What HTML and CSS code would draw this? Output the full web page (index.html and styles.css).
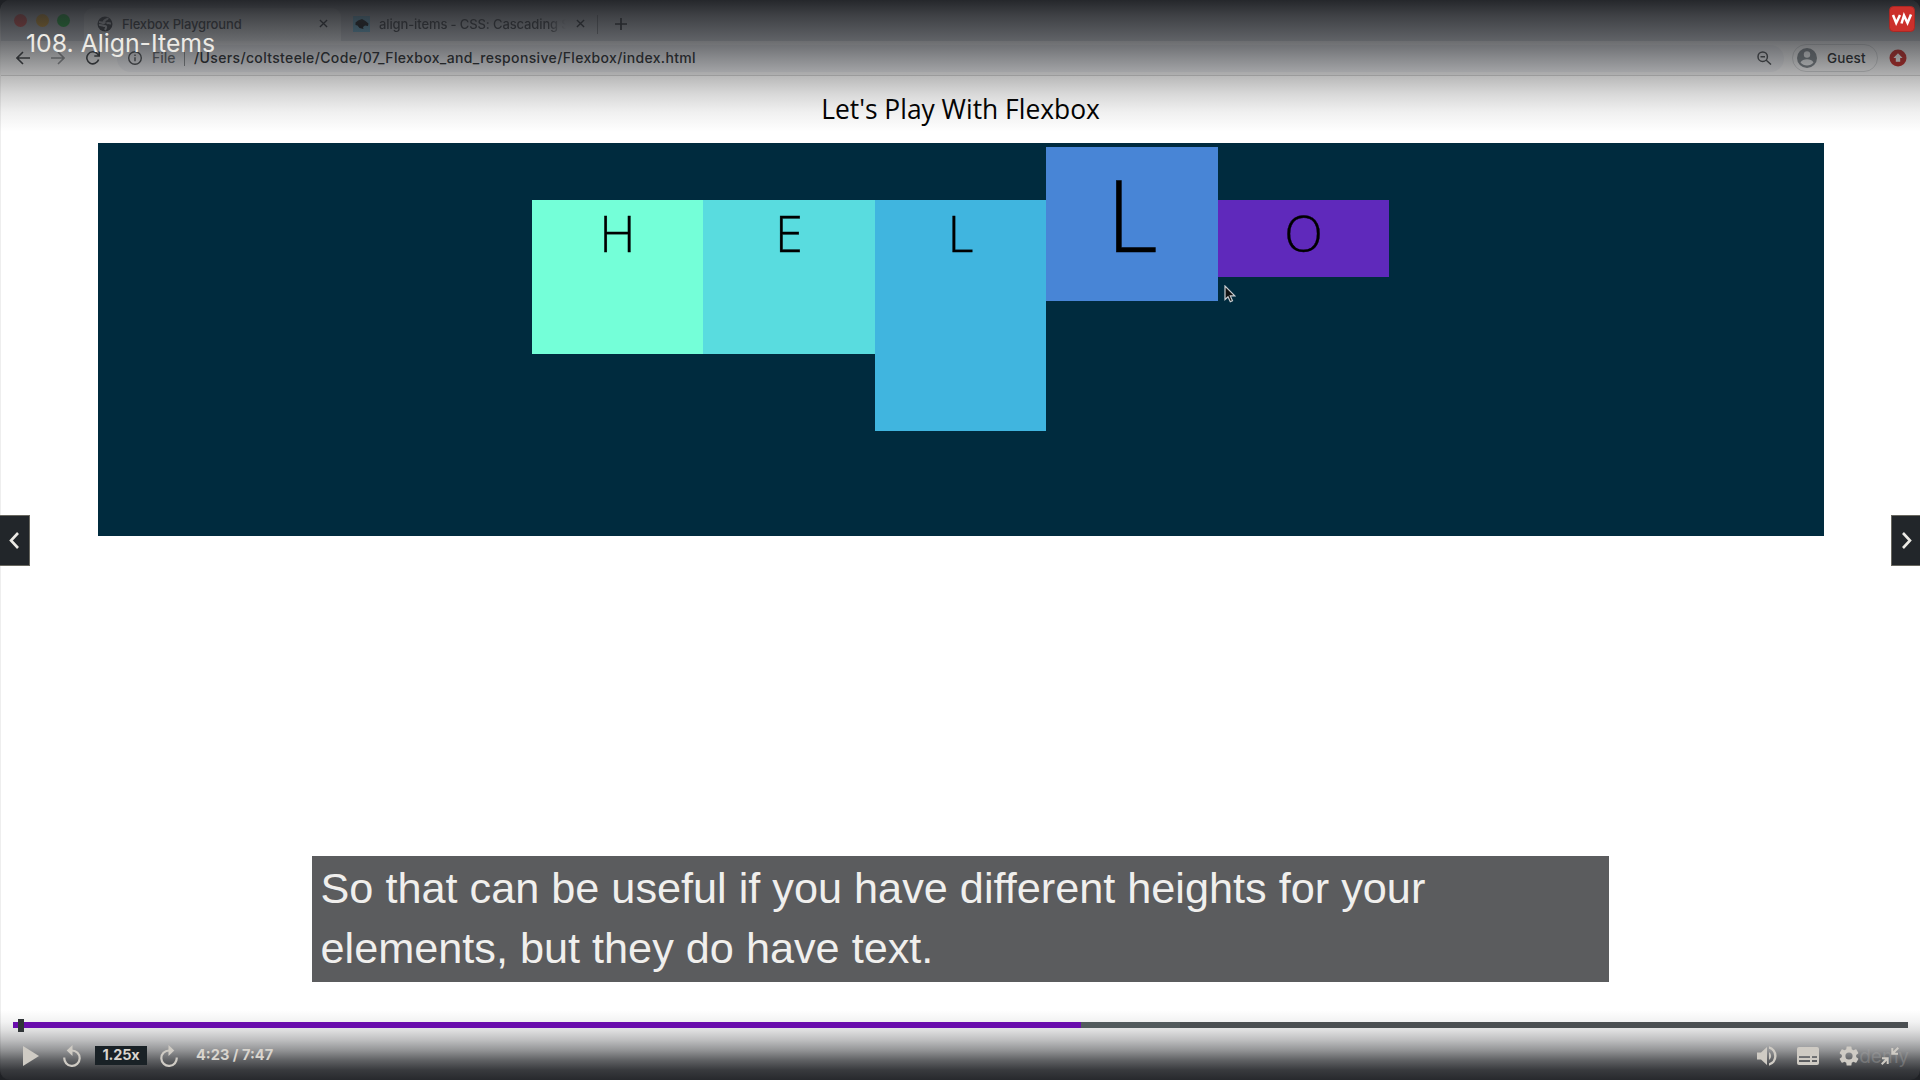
FILE: index.html
```html
<!DOCTYPE html>
<html lang="en">
<head>
<meta charset="utf-8">
<title>108. Align-Items</title>
<link rel="stylesheet" href="styles.css">
</head>
<body>
<div class="player">
  <div class="browser">
    <div class="tabstrip">
      <div class="lights"><i class="red"></i><i class="yellow"></i><i class="green"></i></div>
      <div class="tab active">
        <svg class="favicon" viewBox="0 0 16 16"><circle cx="8" cy="8" r="7.500" fill="#33363a"/><path d="M2 6c2 0 3 1 5 1 1 0 1-1.500 0-2 1-1.500 3-1 4-3M2 9c3-.5 4 1 6 1s1 2 0 4M9.500 7.500c1.500-1 3 0 4.500 0" stroke="#d5d8dc" stroke-width="2" fill="none"/></svg>
        <span class="tab-title">Flexbox Playground</span>
        <svg class="close" viewBox="0 0 10 10"><path d="M1 1l8 8M9 1L1 9"/></svg>
      </div>
      <div class="tab second">
        <svg class="mdn" viewBox="0 0 17 16"><path fill="#6fc4e8" d="M0 0h17v16H0z"/><path fill="#000" d="M2.500 6.500l2.500-2 4-1.500 3.500 2 3 2.500-.500 2.500-3-.500-2 1.500.500 2-4-1-2-2.500-2-.500z"/></svg>
        <span class="tab-title fade">align-items - CSS: Cascading S</span>
        <svg class="close" viewBox="0 0 10 10"><path d="M1 1l8 8M9 1L1 9"/></svg>
      </div>
      <svg class="plus" viewBox="0 0 12 12"><path d="M6 0v12M0 6h12"/></svg>
    </div>
    <div class="toolbar">
      <svg class="tool" viewBox="0 0 14 14"><path d="M14 7H1.500M7 1L1 7l6 6"/></svg>
      <svg class="tool dim" viewBox="0 0 14 14"><path d="M0 7h12.500M7 1l6 6-6 6"/></svg>
      <svg class="tool" viewBox="0 0 14 14"><path d="M12.600 8.500A6 6 0 1 1 11.300 2.800L13 4.500M13.200 0v5H8.300"/></svg>
      <div class="omnibox">
        <svg class="info" viewBox="0 0 14 14"><circle cx="7" cy="7" r="6.300"/><path d="M7 6.200v4M7 3.500v1.400"/></svg>
        <span class="scheme">File</span>
        <span class="url">/Users/coltsteele/Code/07_Flexbox_and_responsive/Flexbox/index.html</span>
        <svg class="lens" viewBox="0 0 15 14"><circle cx="5.700" cy="5.700" r="4.700"/><path d="M9 9l5 4.500M3.500 5.700h4.500"/></svg>
      </div>
      <div class="guest">
        <svg viewBox="0 0 20 20"><circle cx="10" cy="10" r="10" fill="#7b8288"/><circle cx="10" cy="6.500" r="3.200" fill="#eef0f2"/><path d="M3.500 14.500c2-4.300 11-4.300 13 0-3 4-10 4-13 0z" fill="#eef0f2"/></svg>
        <span>Guest</span>
      </div>
      <svg class="update" viewBox="0 0 18 18"><circle cx="9" cy="9" r="8.500" fill="#c5221f"/><path d="M9 4.200l4.600 4.900h-2.400v3.700H6.800V9.100H4.400z" fill="#fff"/></svg>
    </div>
    <main class="page">
      <h1>Let's Play With Flexbox</h1>
      <section class="container">
        <div class="box h">H</div>
        <div class="box e">E</div>
        <div class="box l">L</div>
        <div class="box big">L</div>
        <div class="box o">O</div>
        <svg class="cursor" viewBox="0 0 12 18"><path d="M1 1v13.500l3-2.800 2.300 5 2.200-1-2.200-4.800h4.500z" fill="#111" stroke="#c9cdd0" stroke-width="1.200"/></svg>
      </section>
    </main>
  </div>

  <div class="overlay">
    <header class="shade-top">
      <h2>108. Align-Items</h2>
      <svg class="badge" viewBox="0 0 26 26"><rect x=".5" y=".5" width="25" height="25" rx="4" fill="#cc302b" stroke="#a92824"/><path d="M4 9l3.200 8L11 9M12.500 17.500L15 9.500l3.500 7.500L22 8.500" fill="none" stroke="#fff" stroke-width="2.500"/></svg>
    </header>
    <nav class="arrows">
      <button class="prev" aria-label="Previous"><svg viewBox="0 0 10 17"><path d="M9 1L2 8.500 9 16"/></svg></button>
      <button class="next" aria-label="Next"><svg viewBox="0 0 10 17"><path d="M1 1l7 7.500L1 16"/></svg></button>
    </nav>
    <p class="caption">So that can be useful if you have different heights for your<br>elements, but they do have text.</p>
    <footer class="shade-bottom">
      <div class="track"><div class="buffered"></div><div class="played"></div><div class="thumb"></div></div>
      <div class="controls">
        <svg class="play" viewBox="0 0 16 20"><path d="M0 0l16 10L0 20z"/></svg>
        <svg class="skip back" viewBox="0 0 18 22"><path class="line" d="M1.300 12.500A7.700 7.700 0 1 0 9 5.500"/><path d="M9.500 0v11L3.700 5.500z"/></svg>
        <span class="rate">1.25x</span>
        <svg class="skip fwd" viewBox="0 0 18 22"><path class="line" d="M16.700 12.500A7.700 7.700 0 1 1 9 5.500"/><path d="M8.500 0v11l5.800-5.500z"/></svg>
        <span class="time">4:23 / 7:47</span>
        <svg class="volume" viewBox="0 0 20 20"><path d="M0 6.500h4L10 1v18l-6-5.500H0zM12 6a4.800 4.800 0 0 1 0 8z"/><path d="M12 0.300a10 10 0 0 1 0 19.400v-2.500a7.600 7.600 0 0 0 0-14.400z"/></svg>
        <svg class="cc" viewBox="0 0 22 18"><path fill-rule="evenodd" d="M2 0h18a2 2 0 0 1 2 2v14a2 2 0 0 1-2 2H2a2 2 0 0 1-2-2V2a2 2 0 0 1 2-2zM2 9v2h11V9zM15 9v2h5V9zM2 13v2h11v-2zM15 13v2h5v-2z"/></svg>
        <svg class="gear" viewBox="2 2 20 20"><path d="M19.140 12.940c.040-.3.060-.610.060-.940s-.020-.640-.070-.940l2.030-1.580c.180-.140.230-.410.120-.610l-1.920-3.320c-.120-.220-.370-.290-.590-.220l-2.390.96c-.5-.38-1.030-.7-1.620-.94l-.36-2.540A.48.48 0 0 0 13.920 2.400h-3.840c-.24 0-.43.170-.47.410l-.36 2.540c-.59.240-1.130.57-1.620.94l-2.390-.96c-.22-.08-.47 0-.59.22L2.740 8.870c-.12.21-.08.470.12.610l2.030 1.580c-.05.3-.09.630-.09.940s.020.640.070.940l-2.030 1.580c-.18.140-.23.410-.12.610l1.920 3.320c.12.220.37.290.59.220l2.390-.96c.5.380 1.030.7 1.620.94l.36 2.540c.05.240.24.410.48.410h3.840c.24 0 .44-.17.470-.41l.36-2.540c.59-.24 1.130-.56 1.620-.94l2.390.96c.22.080.47 0 .59-.22l1.920-3.320c.12-.22.070-.47-.12-.61zM12 15.600A3.600 3.600 0 1 1 12 8.400a3.600 3.600 0 0 1 0 7.200z"/></svg>
        <div class="exit">
          <span class="watermark">demy</span>
          <svg viewBox="0 0 18 18"><path d="M10.300 1v6.800H17v-2h-3.200L18 1.400 16.600 0 12.300 4.300V1zM7.700 17v-6.800H1v2h3.200L0 16.600 1.400 18l4.300-4.300V17z"/></svg>
        </div>
      </div>
    </footer>
  </div>
</div>
</body>
</html>
```
FILE: styles.css
```css
* { box-sizing: border-box; margin: 0; padding: 0; }
body { width: 1920px; height: 1080px; overflow: hidden; background: #1a1c20; font-family: Inter, sans-serif; }
svg { display: block; flex: none; }

.player { display: grid; width: 1920px; height: 1080px; }
.browser, .overlay { grid-area: 1 / 1; min-width: 0; display: flex; flex-direction: column; }

/* Recorded browser window */
.browser { background: #fff; border-left: 1px solid #eee; border-radius: 10px; overflow: hidden; }
.tabstrip { height: 41px; background: #d3d6db; display: flex; align-items: flex-end; }
.lights { display: flex; gap: 8.500px; width: 83px; height: 41px; padding: 14px 0 0 13px; }
.lights i { width: 13px; height: 13px; border-radius: 50%; }
.red { background: #ff4f49; }
.yellow { background: #ffb321; }
.green { background: #0ec52c; }
.tab { height: 33px; display: flex; align-items: center; padding-bottom: 2px; font-size: 13px; font-weight: 500; color: #33363a; }
.active { width: 257px; padding-left: 13px; padding-right: 13px; background: #edeff1; border-radius: 9px 9px 0 0; }
.tab-title { margin-left: 9px; white-space: nowrap; flex: 1; }
.active .tab-title { letter-spacing: -0.150px; }
.favicon { width: 16px; height: 16px; }
.close { width: 9px; height: 9px; fill: none; stroke: #202327; stroke-width: 1.500; }
.second { width: 256px; padding-left: 12px; padding-right: 12px; }
.second .close { margin-left: 10px; }
.mdn { width: 17px; height: 16px; }
.fade { letter-spacing: -0.120px; overflow: hidden; -webkit-mask-image: linear-gradient(90deg, #000 90%, transparent 100%); mask-image: linear-gradient(90deg, #000 90%, transparent 100%); }
.plus { width: 30px; height: 19px; margin-bottom: 7px; padding: 3px 0 4px 17px; border-left: 1px solid #85888c; stroke: #202327; stroke-width: 1.700; }

.toolbar { height: 35px; background: #f4f4f5; border-bottom: 1px solid #d4d4d5; display: flex; align-items: center; padding-left: 15px; color: #202327; }
.tool { width: 14px; height: 14px; margin-right: 21px; fill: none; stroke: #34373b; stroke-width: 1.600; }
.tool.dim { stroke: #8c8e91; }
.tool:nth-child(3) { margin-right: 17px; }
.omnibox { width: 1667px; height: 27px; border-radius: 14px; background: #e9eaee; display: flex; align-items: center; padding: 0 12px 0 11px; font-size: 14px; font-weight: 500; line-height: 16px; }
.info { width: 14px; height: 14px; fill: none; stroke: #44474b; stroke-width: 1.400; }
.scheme { color: #5f6368; margin-left: 10px; padding-right: 8px; border-right: 1px solid #85888c; }
.url { margin-left: 9.500px; padding-bottom: 1px; flex: 1; letter-spacing: 0.350px; }
.lens { width: 15px; height: 14px; fill: none; stroke: #44474b; stroke-width: 1.500; }
.guest { width: 86px; height: 28px; margin-left: 8px; border: 1px solid #d0d2d4; border-radius: 14px; display: flex; align-items: center; gap: 10px; padding-left: 4px; font-size: 13.500px; font-weight: 500; letter-spacing: 0.150px; }
.guest svg { width: 20px; height: 20px; }
.update { width: 18px; height: 18px; margin-left: 10.500px; }

.page { padding: 16px 96.500px 0; font-family: "Open Sans", sans-serif; color: #000; }
.page h1 { height: 51px; text-align: center; font-size: 26.400px; font-weight: 400; line-height: 34px; }
.container { position: relative; height: 393px; background: #002b3e; display: flex; justify-content: center; align-items: baseline; padding-top: 3.500px; }
.box { width: 171.500px; text-align: center; font-size: 50.500px; line-height: 66px; font-weight: 300; -webkit-text-stroke: 0.300px #000; }
.h { height: 154px; background: #74ffd8; }
.e { height: 154px; background: #59dcdf; }
.l { height: 231px; background: #40b5df; }
.big { height: 154.500px; background: #4885d6; font-size: 100px; line-height: 132px; -webkit-text-stroke-width: 0.500px; }
.o { height: 77px; background: #5f29bb; }
.cursor { position: absolute; left: 1126px; top: 142px; width: 12px; height: 18px; }

/* Player chrome */
.overlay { z-index: 1; justify-content: space-between; position: relative; }
.shade-top { height: 135px; display: flex; justify-content: space-between; padding: 0 5px 0 26px;
  background: linear-gradient(rgba(30,32,36,.96) 0, rgba(38,40,44,.86) 15px, rgba(40,42,46,.68) 40px, rgba(40,42,44,.5) 58px, rgba(40,40,40,.33) 76px, rgba(40,40,40,.18) 94px, rgba(40,40,40,.07) 112px, transparent 132px); }
.shade-top h2 { font-size: 24.800px; line-height: 30px; font-weight: 400; color: #eceae5; margin-top: 28px; }
.badge { width: 26px; height: 26px; margin-top: 6px; }
.arrows { display: flex; justify-content: space-between; position: absolute; left: 0; right: 0; top: 515px; }
.arrows button { width: 30px; height: 51px; border: 1px solid #68675f; background: #22262a; display: flex; align-items: center; justify-content: center; }
.arrows .prev { border-left: 0; padding-right: 2px; }
.arrows .next { width: 29px; border-right: 0; padding-left: 2px; }
.arrows svg { width: 10px; height: 17px; fill: none; stroke: #eceae5; stroke-width: 2.600; }
.caption { width: 1297px; height: 126px; margin: auto 0 28px 312px; padding: 2px 8.500px; background: #5b5c5e; color: #f0efed; font: 43.240px/60px "Liberation Sans", Arial, sans-serif; }
.shade-bottom { height: 70px; padding: 12px 12px 0 13px;
  background: linear-gradient(transparent 0, rgba(32,34,38,.06) 12px, rgba(32,34,38,.14) 20px, rgba(32,34,38,.29) 30px, rgba(32,34,38,.48) 40px, rgba(32,34,38,.71) 50px, rgba(32,34,38,.89) 60px, rgba(32,34,38,.97) 70px); }
.track { position: relative; height: 6px; background: #4b4f52; }
.buffered, .played { position: absolute; left: 0; top: 0; height: 6px; }
.buffered { width: 1167px; background: #535b5d; }
.played { width: 1068px; background: #6a0dad; }
.thumb { position: absolute; left: 5px; top: -3px; width: 6px; height: 13px; background: #303538; }
.controls { height: 52px; display: flex; align-items: center; padding: 3px 0 0 10px; fill: #cfcbc4; }
.play { width: 16px; height: 20px; }
.skip { width: 18px; height: 22px; }
.line { fill: none; stroke: #cfcbc4; stroke-width: 2.200; }
.back { margin-left: 24px; }
.rate { width: 52px; height: 19px; margin: 0 13px 0 14px; background: #192126; color: #d9d5ce; font-weight: 700; font-size: 14.500px; line-height: 18px; letter-spacing: -0.200px; text-align: center; }
.time { margin-left: 18px; padding-bottom: 1px; flex: 1; color: #d9d5ce; font-weight: 700; font-size: 14.600px; line-height: 18px; }
.volume { width: 20px; height: 20px; margin-right: 20px; }
.cc { width: 22px; height: 18px; margin-right: 20px; }
.gear { width: 20px; height: 20px; margin-right: 22px; }
.exit { position: relative; margin-right: 9px; }
.exit svg { position: relative; width: 18px; height: 18px; }
.watermark { position: absolute; right: -10px; top: -2px; font-size: 19px; line-height: 24px; color: rgba(165,165,165,.4); }
```
